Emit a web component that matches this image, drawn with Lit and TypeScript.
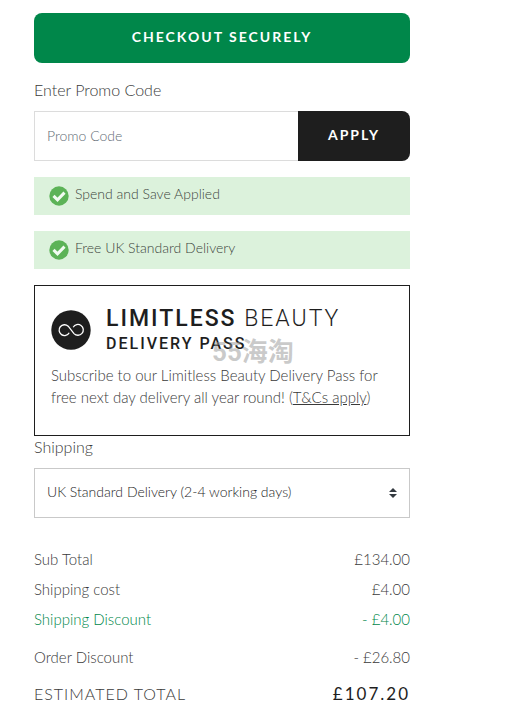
import { LitElement, html, css } from "lit";
import { customElement, property } from "lit/decorators.js";

@customElement("offer-note")
class OfferNote extends LitElement {
  @property() text = "";

  static styles = css`
    :host {
      display: flex;
      align-items: center;
      gap: 6px;
      height: 38px;
      padding: 0 15px;
      box-sizing: border-box;
      background: #dcf2dc;
      color: #3c463c;
      font-size: 14px;
    }
    .tick {
      flex: none;
      width: 20px;
      height: 20px;
    }
    .text {
      padding-bottom: 4px;
      line-height: 18px;
    }
  `;

  render() {
    return html`
      <svg class="tick" viewBox="0 0 20 20" aria-hidden="true">
        <circle cx="10" cy="10" r="9.7" fill="#5cb357" />
        <path d="M4.5 9.9l4 3.9 7-7.2" fill="none" stroke="#f1fbf1" stroke-width="3" />
      </svg>
      <span class="text">${this.text}</span>
    `;
  }
}

@customElement("app-root")
class AppRoot extends LitElement {
  static styles = css`
    :host {
      display: block;
      background: #fff;
      color: #3a3a3a;
      font-family: Lato, "Liberation Sans", sans-serif;
      font-weight: 300;
      font-size: 15px;
      line-height: 22px;
    }
    .basket {
      display: flex;
      flex-direction: column;
      padding: 13px 97px 0 34px;
    }
    button,
    input,
    select {
      box-sizing: border-box;
      height: 50px;
      margin: 0;
      font: inherit;
    }
    button {
      border: 0;
      color: #fff;
      font-size: 14px;
      font-weight: 700;
      letter-spacing: 2px;
      text-transform: uppercase;
      padding: 0 0 2px;
    }
    .checkout {
      border-radius: 8px;
      background: #00874a;
    }
    .label {
      font-size: 16px;
    }
    .promo-label {
      margin: 16px 0 10px;
    }
    .promo {
      display: flex;
    }
    .code {
      flex: 1;
      min-width: 0;
      border: 1px solid #dcdcdc;
      border-right: 0;
      padding: 0 12px 2px;
      font-size: 14px;
    }
    .code::placeholder {
      color: #626b74;
      opacity: 1;
    }
    .apply {
      width: 112px;
      border-radius: 0 8px 8px 0;
      background: #1e1e1e;
    }
    .notes {
      display: grid;
      gap: 16px;
      margin: 16px 0;
    }
    .pass {
      position: relative;
      border: 1px solid #1e1e1e;
      padding: 19px 16px 27px;
    }
    .brand {
      display: flex;
      align-items: center;
      gap: 15px;
      color: #1e1e1e;
    }
    .infinity {
      flex: none;
      width: 40px;
      height: 40px;
    }
    .name,
    .sub {
      margin: 0;
      white-space: nowrap;
      font-family: Roboto, "Liberation Sans", sans-serif;
    }
    .name {
      font-size: 23px;
      line-height: 28px;
      font-weight: 300;
      letter-spacing: 2px;
    }
    .name strong {
      font-weight: 500;
    }
    .sub {
      font-size: 16px;
      line-height: 22px;
      font-weight: 500;
      letter-spacing: 2px;
    }
    .about {
      margin: 9px 0 0;
    }
    a {
      color: inherit;
    }
    .watermark {
      position: absolute;
      left: 177px;
      top: 52px;
      color: rgba(150, 150, 150, 0.5);
      font: 700 26px/28px Roboto, "Noto Sans CJK SC", sans-serif;
      pointer-events: none;
    }
    .shipping {
      position: relative;
      margin: 10px 0 30px;
    }
    .shipping select {
      display: block;
      width: 100%;
      appearance: none;
      border: 1px solid #c9c9c9;
      border-radius: 0;
      background: #fff;
      color: #1e1e1e;
      padding: 0 32px 2px 12px;
      font-size: 14px;
    }
    .arrows {
      position: absolute;
      right: 13px;
      top: 20px;
      width: 8px;
      height: 10px;
      pointer-events: none;
    }
    .totals {
      margin: 0;
    }
    .row {
      display: flex;
      justify-content: space-between;
      margin-bottom: 8px;
    }
    .row dd {
      margin: 0;
    }
    .saving {
      color: #00874a;
      margin-bottom: 16px;
    }
    .order {
      margin-bottom: 16px;
    }
    .total {
      margin-bottom: 0;
      font-size: 16px;
      line-height: 20px;
      letter-spacing: 1px;
    }
    .total dd {
      color: #1e1e1e;
      font-size: 17px;
      font-weight: 400;
      letter-spacing: 2px;
    }
  `;

  render() {
    return html`
      <main class="basket">
        <button class="checkout" type="button">Checkout securely</button>

        <label class="label promo-label" for="promo">Enter Promo Code</label>
        <div class="promo">
          <input class="code" id="promo" type="text" placeholder="Promo Code" />
          <button class="apply" type="button">Apply</button>
        </div>

        <div class="notes">
          <offer-note text="Spend and Save Applied"></offer-note>
          <offer-note text="Free UK Standard Delivery"></offer-note>
        </div>

        <section class="pass">
          <div class="brand">
            <svg class="infinity" viewBox="0 0 40 40" aria-hidden="true">
              <circle cx="20" cy="20" r="19.7" fill="#1e1e1e" />
              <path
                d="M18.2 22.8A5.4 5.4 0 1 1 17.2 16.2L23 23.6A5.4 5.4 0 1 0 22.2 17.2"
                fill="none" stroke="#fff" stroke-width="1.3" />
            </svg>
            <div>
              <h2 class="name"><strong>LIMITLESS</strong> BEAUTY</h2>
              <p class="sub">DELIVERY PASS</p>
            </div>
          </div>
          <p class="about">
            Subscribe to our Limitless Beauty Delivery Pass for free next day
            delivery all year round! (<a href="#terms">T&amp;Cs apply</a>)
          </p>
          <span class="watermark">55海淘</span>
        </section>

        <label class="label" for="shipping">Shipping</label>
        <div class="shipping">
          <select id="shipping">
            <option>UK Standard Delivery (2-4 working days)</option>
          </select>
          <svg class="arrows" viewBox="0 0 8 10" aria-hidden="true">
            <path d="M0 4L4 0l4 4zM0 6h8L4 10z" fill="#343a40" />
          </svg>
        </div>

        <dl class="totals">
          <div class="row"><dt>Sub Total</dt><dd>£134.00</dd></div>
          <div class="row"><dt>Shipping cost</dt><dd>£4.00</dd></div>
          <div class="row saving"><dt>Shipping Discount</dt><dd>- £4.00</dd></div>
          <div class="row order"><dt>Order Discount</dt><dd>- £26.80</dd></div>
          <div class="row total"><dt>ESTIMATED TOTAL</dt><dd>£107.20</dd></div>
        </dl>
      </main>
    `;
  }
}
